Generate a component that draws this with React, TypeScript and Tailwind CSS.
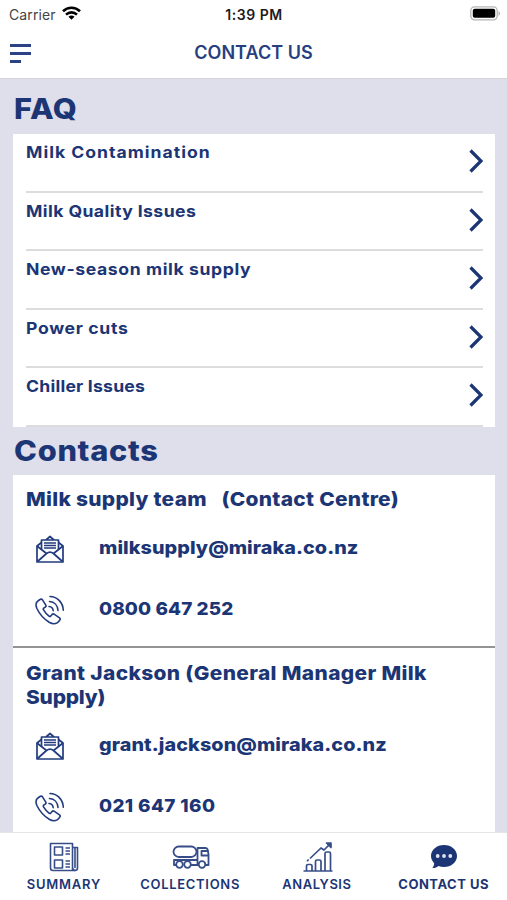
import React from "react";

function MailIcon() {
  return (
    <svg width="30" height="30" viewBox="0 0 30 30" fill="none" stroke="#213b7e" strokeWidth="1.7" strokeLinejoin="round">
      <path d="M6.500 8.500 2 12v16h26V12l-4.500-3.500" />
      <path d="M6.500 15.500V6h17v9.500M11 6l4-3.500L19 6" />
      <path d="M2 12l9.500 7.500M28 12l-9.500 7.500M2.500 27.500l9-8c2-1.500 5-1.500 7 0l9 8" />
      <path d="M9 9h12M9 11.500h12M9 14h12" strokeWidth="1.300" />
    </svg>
  );
}

function PhoneIcon() {
  return (
    <svg width="30" height="30" viewBox="0 0 30 30" fill="none" stroke="#213b7e" strokeWidth="1.600" strokeLinecap="round" strokeLinejoin="round">
      <path d="M3.500 5.500 5.500 4.300c.8-.4 1.500-.2 2 .6l3.300 5.200c.4.800.2 1.500-.5 2l-1.600 1.100c-.6.500-.6 1-.2 1.700 1.500 2.500 3.200 4.500 5.500 6.200.7.500 1.300.4 1.800-.2l1.300-1.500c.6-.6 1.200-.7 2-.2l5.400 3.600c.8.600.9 1.300.4 2-2.600 4.200-6.200 5-10.700 2.500C9 24 4.500 19 1.900 13.500.3 9.800.8 7.200 3.500 5.500z" />
      <path d="M14 11.500c2.500.3 4 1.800 4.200 4.300M14.500 6.500c5 .3 8.200 4 8.500 9M15 1.500c7.500.3 13 6 13.300 13.800" />
    </svg>
  );
}

function SummaryIcon() {
  return (
    <svg width="30" height="30" viewBox="0 0 30 30" fill="none" stroke="#364d88" strokeWidth="1.600" strokeLinejoin="round">
      <path d="M1.500 1.500h22v24c0 2 1 3 2.500 3H4c-1.500 0-2.500-1-2.500-2.500z" />
      <path d="M23.500 5.500h5V26c0 3.300-5 3.300-5 0M26 6v20" />
      <path d="M5.500 5h8v8h-8zM5.500 18h8v8h-8z" />
      <path d="M16.500 6H21M16.500 9H21M16.500 12H21M16.500 19H21M16.500 22H21M16.500 25H21" />
    </svg>
  );
}

function TruckIcon() {
  return (
    <svg width="38" height="24" viewBox="0 0 38 24" fill="none" stroke="#364d88" strokeWidth="1.800" strokeLinejoin="round">
      <rect x="1.500" y="1.500" width="23" height="10.500" rx="5.250" />
      <path d="M4.200 20H2v-5h23.500M25.500 20V3h8c1.300 0 2 .6 2.300 2l.7 4.500V20H33.300M36.500 10.500h-7V6H36M18.800 20h7.900" />
      <circle cx="7.500" cy="19.500" r="3.300" />
      <circle cx="15.500" cy="19.500" r="3.300" />
      <circle cx="30" cy="19.500" r="3.300" />
    </svg>
  );
}

function AnalysisIcon() {
  return (
    <svg width="30" height="30" viewBox="0 0 30 30" fill="none" stroke="#364d88" strokeWidth="1.700" strokeLinejoin="round">
      <path d="M.5 29h29M3.500 29v-5c0-1 .5-1.500 1.500-1.500h2.500c1 0 1.500.5 1.500 1.500v5M12.500 29V19.500c0-1 .5-1.500 1.500-1.500h2.500c1 0 1.500.5 1.500 1.500V29M22 29V11.500c0-1 .5-1.500 1.500-1.500H26c1 0 1.500.5 1.500 1.500V29" />
      <path d="M7 16.500 18 6l3 2 5-5" />
      <path d="M4.500 18.700 5.200 18" strokeLinecap="round" />
      <path d="M23.500 1h4.500v4.500z" fill="#364d88" />
    </svg>
  );
}

function ChatIcon() {
  return (
    <svg width="26" height="24" viewBox="0 0 26 24">
      <path d="M13 0c7.200 0 13 4.800 13 11s-5.800 11-13 11c-2 0-4-.4-5.700-1.100C5.500 22.500 3.500 23.300 1.300 23c1.200-1.300 1.900-3 1.900-4.800C1.200 16.200 0 13.700 0 11 0 4.800 5.800 0 13 0z" fill="#1c3575" />
      <g fill="#e1e5f0">
        <circle cx="6.700" cy="11" r="1.900" />
        <circle cx="13" cy="11" r="1.900" />
        <circle cx="19.300" cy="11" r="1.900" />
      </g>
    </svg>
  );
}

const faqs = [
  { label: "Milk Contamination", tracking: "tracking-[0.9px]" },
  { label: "Milk Quality Issues", tracking: "tracking-[0.38px]" },
  { label: "New-season milk supply", tracking: "tracking-[0.55px]" },
  { label: "Power cuts", tracking: "tracking-[0.6px]" },
  { label: "Chiller Issues", tracking: "tracking-[0.2px]" },
];

function ContactRow({ icon, children, className }: { icon: React.ReactNode; children: React.ReactNode; className: string }) {
  return (
    <div className="flex h-[60.5px] items-center pl-[22px]">
      <div className="w-[64px] shrink-0">{icon}</div>
      <span className={`mb-[3px] origin-left whitespace-nowrap text-[18px] font-extrabold ${className}`}>{children}</span>
    </div>
  );
}

export default function App() {
  return (
    <div className="flex h-[900px] w-[507px] flex-col overflow-hidden bg-[#dfdfeb] font-['Inter',sans-serif] text-[#1c3575]">
      <header className="h-[79px] shrink-0 border-b border-[#d3d3da] bg-white">
        <div className="grid h-7 grid-cols-[1fr_auto_1fr] items-center pl-[9px] pr-[6px] text-[14px] text-[#1c1c1c]">
          <div className="flex items-center gap-[6px]">
            <span className="tracking-[0.1px] text-[#444]">Carrier</span>
            <svg className="mb-[2px]" width="19" height="14" viewBox="0 0 19 14" fill="none" stroke="#000" strokeWidth="2.600">
              <path d="M1 5.200c4.800-4.600 12.200-4.600 17 0M4 8.600c3.200-3 7.800-3 11 0" />
              <path d="M6.500 10.700c1.700-1.500 4.300-1.500 6 0l-3 3z" fill="#000" stroke="none" />
            </svg>
          </div>
          <span className="mr-[2px] font-semibold tracking-[0.55px]">1:39 PM</span>
          <svg className="mb-[2px] justify-self-end" width="31" height="15" viewBox="0 0 31 15">
            <rect x=".8" y=".8" width="26.400" height="13" rx="3.800" fill="#fff" stroke="#b5b5b5" strokeWidth="1.300" />
            <rect x="2.800" y="2.800" width="22.400" height="9" rx="2" fill="#000" />
            <path d="M28.500 5v5c2-.8 2-4.200 0-5z" fill="#b5b5b5" />
          </svg>
        </div>
        <div className="grid h-12 grid-cols-[1fr_auto_1fr] items-center pl-[10px] pr-[10px]">
          <div className="flex flex-col gap-[5.5px] pt-[3px]">
            <i className="h-[2.5px] w-[21px] bg-[#2b4386]" />
            <i className="h-[2.5px] w-[21px] bg-[#2b4386]" />
            <i className="h-[2.5px] w-[11px] bg-[#2b4386]" />
          </div>
          <h1 className="text-[18px] font-semibold tracking-[0.05px] text-[#273f80]">CONTACT US</h1>
        </div>
      </header>

      <main className="min-h-0 flex-1 overflow-hidden pl-[13px] pr-3">
        <h2 className="flex h-[55px] origin-left scale-x-110 items-center pl-px pt-[5px] text-[28px] font-extrabold tracking-[0.5px]">FAQ</h2>
        <div className="bg-white px-[12.5px]">
          {faqs.map((f) => (
            <div key={f.label} className="flex h-[58.6px] items-start justify-between border-b-2 border-[#dcdcdc]">
              <span className={`origin-left scale-x-110 pt-[6px] text-[16px] font-bold leading-6 ${f.tracking}`}>{f.label}</span>
              <svg className="mt-[15px]" width="14" height="24" viewBox="0 0 14 24" fill="none" stroke="#1c3575" strokeWidth="3.200">
                <path d="M1.500 1.500 12 12 1.500 22.500" />
              </svg>
            </div>
          ))}
        </div>
        <h2 className="flex h-12 origin-left scale-x-110 items-center pl-px text-[28px] font-extrabold tracking-[0.6px]">Contacts</h2>
        <section className="h-[173px] border-b-2 border-[#949494] bg-white pt-[13px]">
          <h3 className="ml-[13px] origin-left scale-x-110 whitespace-pre text-[19px] font-extrabold leading-6 tracking-[0.26px]">Milk supply team   (Contact Centre)</h3>
          <div className="pt-[7px]">
            <ContactRow icon={<MailIcon />} className="scale-x-110 tracking-[0.05px]">milksupply@miraka.co.nz</ContactRow>
            <ContactRow icon={<PhoneIcon />} className="scale-x-105 tracking-[0.1px]">0800 647 252</ContactRow>
          </div>
        </section>
        <section className="h-[200px] bg-white pt-[14px]">
          <h3 className="ml-[13px] origin-left scale-x-110 whitespace-nowrap text-[19px] font-extrabold leading-6 tracking-[0.32px]">
            Grant Jackson (General Manager Milk<br /><span className="tracking-[-0.2px]">Supply)</span>
          </h3>
          <div className="pt-[6px]">
            <ContactRow icon={<MailIcon />} className="scale-x-110 tracking-[0.07px]">grant.jackson@miraka.co.nz</ContactRow>
            <ContactRow icon={<PhoneIcon />} className="scale-x-105 tracking-[0.35px]">021 647 160</ContactRow>
          </div>
        </section>
      </main>

      <nav className="grid h-[68px] shrink-0 grid-cols-4 border-t border-[#e3e3e8] bg-white text-center text-[13px] font-semibold">
        <div className="flex flex-col items-center">
          <div className="flex h-[43px] items-center pl-[2px] pt-[5px]"><SummaryIcon /></div>
          <span className="whitespace-nowrap pl-px leading-4 tracking-[0.75px]">SUMMARY</span>
        </div>
        <div className="flex flex-col items-center">
          <div className="flex h-[43px] items-center pl-[2px] pt-[5px]"><TruckIcon /></div>
          <span className="whitespace-nowrap leading-4 tracking-[0.7px]">COLLECTIONS</span>
        </div>
        <div className="flex flex-col items-center">
          <div className="flex h-[43px] items-center pl-[2px] pt-[5px]"><AnalysisIcon /></div>
          <span className="whitespace-nowrap leading-4 tracking-[0.5px]">ANALYSIS</span>
        </div>
        <div className="flex flex-col items-center">
          <div className="flex h-[43px] items-center pt-[5px]"><ChatIcon /></div>
          <span className="whitespace-nowrap font-bold leading-4 tracking-[0.5px]">CONTACT US</span>
        </div>
      </nav>
    </div>
  );
}
